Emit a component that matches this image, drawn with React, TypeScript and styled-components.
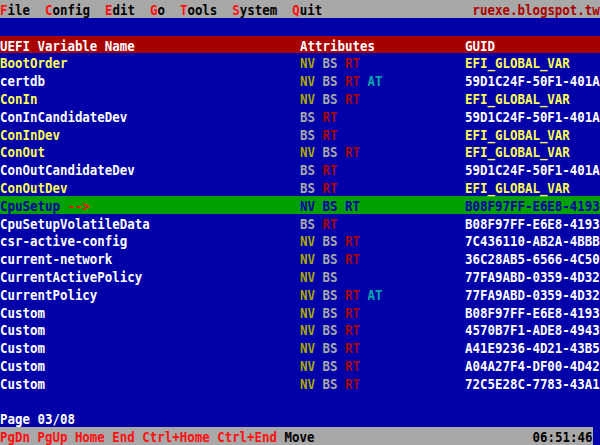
import React from "react";
import styled, { createGlobalStyle, css } from "styled-components";

const C = {
  blue: "#0000A8",
  gray: "#A8A8A8",
  darkRed: "#A80000",
  red: "#FF1010",
  yellow: "#FFFF55",
  white: "#FFFFFF",
  olive: "#A8A800",
  cyan: "#00A8A8",
  green: "#00A000",
  black: "#000000",
};

const ROW = 17.8;
const CH = 7.5;

const tall = css`
  display: inline-block;
  transform: translateY(1px) scaleY(1.18);
  transform-origin: center;
`;

const Global = createGlobalStyle`
  html, body { margin: 0; padding: 0; background: ${C.blue}; overflow: hidden; }
  #root { width: 600px; height: 445px; }
`;

const Screen = styled.div`
  width: 600px;
  height: 445px;
  background: ${C.blue};
  display: grid;
  grid-template-rows: repeat(25, ${ROW}px);
  font-family: "DejaVu Sans Mono", "Liberation Mono", monospace;
  font-size: 12.45px;
  font-weight: bold;
  line-height: ${ROW}px;
  white-space: pre;
  overflow: hidden;
`;

const Bar = styled.div<{ $bg: string; $width?: string }>`
  background: ${(p) => p.$bg};
  width: ${(p) => p.$width ?? "100%"};
  display: flex;
  align-items: center;
  overflow: hidden;
`;

const Menu = styled.div`
  ${tall};
  display: flex;
  gap: ${CH * 2}px;
  color: ${C.black};
`;

const Hot = styled.span<{ $color: string }>`
  color: ${(p) => p.$color};
`;

const Key = styled.span<{ $color: string }>`
  ${tall};
  color: ${(p) => p.$color};
`;

const Site = styled.span`
  ${tall};
  margin-left: auto;
  color: ${C.darkRed};
  width: ${CH * 17}px;
`;

const Row = styled.div<{ $bg?: string }>`
  display: grid;
  grid-template-columns: ${CH * 40}px ${CH * 22}px ${CH * 18}px;
  background: ${(p) => p.$bg ?? "transparent"};
`;

const Cell = styled.span<{ $color: string }>`
  ${tall};
  color: ${(p) => p.$color};
`;

const Attrs = styled.span`
  display: flex;
  gap: ${CH}px;
`;

const Blank = styled.div``;

const Footer = styled.div<{ $color: string }>`
  ${tall};
  color: ${(p) => p.$color};
`;

const Time = styled.span`
  ${tall};
  margin-left: auto;
  color: ${C.black};
`;

type Entry = {
  name: string;
  attrs: string[];
  guid: string;
  yellow?: boolean;
  selected?: boolean;
};

const EFI = "EFI_GLOBAL_VAR";
const entries: Entry[] = [
  { name: "BootOrder", attrs: ["NV", "BS", "RT"], guid: EFI, yellow: true },
  { name: "certdb", attrs: ["NV", "BS", "RT", "AT"], guid: "59D1C24F-50F1-401A" },
  { name: "ConIn", attrs: ["NV", "BS", "RT"], guid: EFI, yellow: true },
  { name: "ConInCandidateDev", attrs: ["BS", "RT"], guid: "59D1C24F-50F1-401A" },
  { name: "ConInDev", attrs: ["BS", "RT"], guid: EFI, yellow: true },
  { name: "ConOut", attrs: ["NV", "BS", "RT"], guid: EFI, yellow: true },
  { name: "ConOutCandidateDev", attrs: ["BS", "RT"], guid: "59D1C24F-50F1-401A" },
  { name: "ConOutDev", attrs: ["BS", "RT"], guid: EFI, yellow: true },
  { name: "CpuSetup", attrs: ["NV", "BS", "RT"], guid: "B08F97FF-E6E8-4193", selected: true },
  { name: "CpuSetupVolatileData", attrs: ["BS", "RT"], guid: "B08F97FF-E6E8-4193" },
  { name: "csr-active-config", attrs: ["NV", "BS", "RT"], guid: "7C436110-AB2A-4BBB" },
  { name: "current-network", attrs: ["NV", "BS", "RT"], guid: "36C28AB5-6566-4C50" },
  { name: "CurrentActivePolicy", attrs: ["NV", "BS"], guid: "77FA9ABD-0359-4D32" },
  { name: "CurrentPolicy", attrs: ["NV", "BS", "RT", "AT"], guid: "77FA9ABD-0359-4D32" },
  { name: "Custom", attrs: ["NV", "BS", "RT"], guid: "B08F97FF-E6E8-4193" },
  { name: "Custom", attrs: ["NV", "BS", "RT"], guid: "4570B7F1-ADE8-4943" },
  { name: "Custom", attrs: ["NV", "BS", "RT"], guid: "A41E9236-4D21-43B5" },
  { name: "Custom", attrs: ["NV", "BS", "RT"], guid: "A04A27F4-DF00-4D42" },
  { name: "Custom", attrs: ["NV", "BS", "RT"], guid: "72C5E28C-7783-43A1" },
];

const attrColor: Record<string, string> = {
  NV: C.olive,
  BS: C.gray,
  RT: C.darkRed,
  AT: C.cyan,
};

const menus = ["File", "Config", "Edit", "Go", "Tools", "System", "Quit"];

export default function App() {
  return (
    <>
      <Global />
      <Screen>
        <Bar $bg={C.gray}>
          <Menu>
            {menus.map((m) => (
              <span key={m}>
                <Hot $color={C.red}>{m[0]}</Hot>
                {m.slice(1)}
              </span>
            ))}
          </Menu>
          <Site>ruexe.blogspot.tw</Site>
        </Bar>
        <Blank />
        <Row $bg={C.darkRed}>
          <Cell $color={C.white}>UEFI Variable Name</Cell>
          <Cell $color={C.white}>Attributes</Cell>
          <Cell $color={C.white}>GUID</Cell>
        </Row>
        {entries.map((e, i) => {
          const sel = !!e.selected;
          const fg = sel ? C.blue : e.yellow ? C.yellow : C.white;
          return (
            <Row key={i} $bg={sel ? C.green : undefined}>
              <Cell $color={fg}>
                {e.name}
                {sel && <Hot $color={C.red}> --&gt;</Hot>}
              </Cell>
              <Attrs>
                {e.attrs.map((a) => (
                  <Cell key={a} $color={sel ? C.blue : attrColor[a]}>
                    {a}
                  </Cell>
                ))}
              </Attrs>
              <Cell $color={fg}>{e.guid}</Cell>
            </Row>
          );
        })}
        <Blank />
        <Footer $color={C.white}>Page 03/08</Footer>
        <Bar $bg={C.gray} $width={`${CH * 79}px`}>
          <Key $color={C.red}>PgDn PgUp Home End Ctrl+Home Ctrl+End</Key>
          <Key $color={C.black}> Move</Key>
          <Time>06:51:46</Time>
        </Bar>
      </Screen>
    </>
  );
}
